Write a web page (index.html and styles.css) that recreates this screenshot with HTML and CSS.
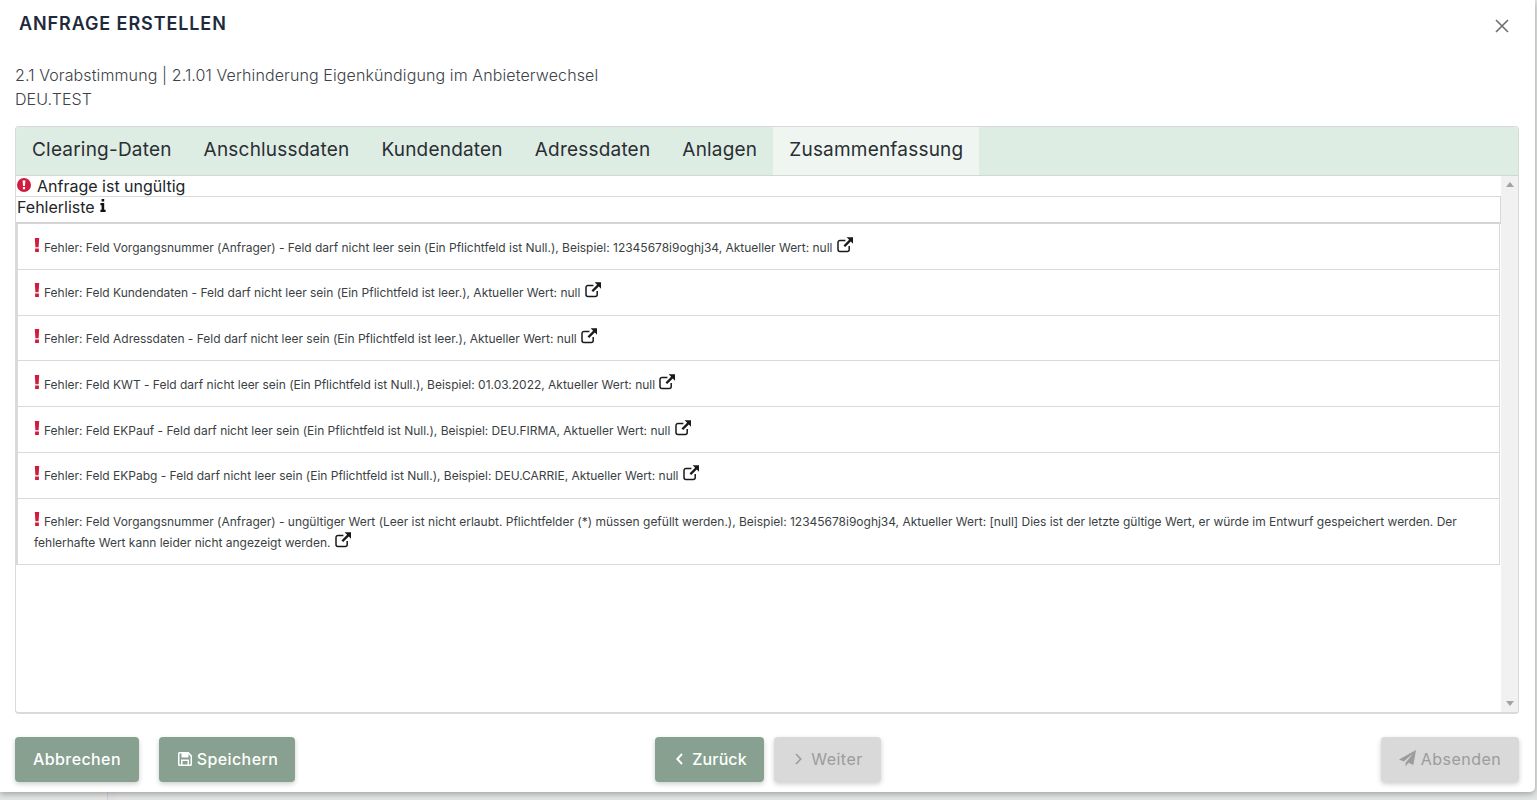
FILE: index.html
```html
<!DOCTYPE html>
<html lang="de">
<head>
<meta charset="utf-8">
<title>Anfrage erstellen</title>
<link rel="stylesheet" href="styles.css">
</head>
<body>
<svg class="defs" width="0" height="0" aria-hidden="true">
  <defs>
    <symbol id="ext" viewBox="0 0 16 16">
      <path d="M12.2 9v3.6a2 2 0 0 1-2 2H3a2 2 0 0 1-2-2V5.400a2 2 0 0 1 2-2h5.400" fill="none" stroke="currentColor" stroke-width="1.5"/>
      <path d="M9.600.3H16v6.400l-2.200-2.200-5.600 5.600-1.700-1.700 5.600-5.600z" fill="currentColor"/>
    </symbol>
    <symbol id="excl" viewBox="0 0 6 14">
      <path d="M.8 0h4.400l-.6 9.200H1.400zM1.100 10.600h3.800V14H1.100z" fill="currentColor"/>
    </symbol>
  </defs>
</svg>
<main class="modal">
  <header class="modal-head">
    <h1 class="title">ANFRAGE ERSTELLEN</h1>
    <svg class="close" viewBox="0 0 14 14" aria-label="Schließen"><path d="M1 1l12 12M13 1L1 13" stroke="currentColor" stroke-width="1.6" fill="none"/></svg>
  </header>
  <div class="subtitle">
    <div>2.1 Vorabstimmung | 2.1.01 Verhinderung Eigenkündigung im Anbieterwechsel</div>
    <div>DEU.TEST</div>
  </div>
  <section class="panel">
    <nav class="tabs">
      <a class="tab">Clearing-Daten</a>
      <a class="tab">Anschlussdaten</a>
      <a class="tab">Kundendaten</a>
      <a class="tab">Adressdaten</a>
      <a class="tab">Anlagen</a>
      <a class="tab active">Zusammenfassung</a>
    </nav>
    <div class="body">
      <div class="content">
        <div class="status">
          <svg class="status-icon" viewBox="0 0 14 14"><circle cx="7" cy="7" r="7" fill="#d01c3f"/><path d="M5.600 2.600h2.800l-.4 5.400H6zM5.900 9h2.200v2.200H5.900z" fill="#fff"/></svg>
          <span>Anfrage ist ungültig</span>
        </div>
        <div class="list-head">
          <span>Fehlerliste</span>
          <svg class="info" viewBox="0 0 6 13"><path d="M1.600 0h2.600v2.400H1.600zM.4 4h3.800v6.800H5.600V13H.4v-2.200h1.200V6.200H.4z" fill="#111"/></svg>
        </div>
        <ul class="errors">
          <li class="error"><svg class="mark"><use href="#excl"/></svg>Fehler: Feld Vorgangsnummer (Anfrager) - Feld darf nicht leer sein (Ein Pflichtfeld ist Null.), Beispiel: 12345678i9oghj34, Aktueller Wert: null <svg class="ext"><use href="#ext"/></svg></li>
          <li class="error"><svg class="mark"><use href="#excl"/></svg>Fehler: Feld Kundendaten - Feld darf nicht leer sein (Ein Pflichtfeld ist leer.), Aktueller Wert: null <svg class="ext"><use href="#ext"/></svg></li>
          <li class="error"><svg class="mark"><use href="#excl"/></svg>Fehler: Feld Adressdaten - Feld darf nicht leer sein (Ein Pflichtfeld ist leer.), Aktueller Wert: null <svg class="ext"><use href="#ext"/></svg></li>
          <li class="error"><svg class="mark"><use href="#excl"/></svg>Fehler: Feld KWT - Feld darf nicht leer sein (Ein Pflichtfeld ist Null.), Beispiel: 01.03.2022, Aktueller Wert: null <svg class="ext"><use href="#ext"/></svg></li>
          <li class="error"><svg class="mark"><use href="#excl"/></svg>Fehler: Feld EKPauf - Feld darf nicht leer sein (Ein Pflichtfeld ist Null.), Beispiel: DEU.FIRMA, Aktueller Wert: null <svg class="ext"><use href="#ext"/></svg></li>
          <li class="error"><svg class="mark"><use href="#excl"/></svg>Fehler: Feld EKPabg - Feld darf nicht leer sein (Ein Pflichtfeld ist Null.), Beispiel: DEU.CARRIE, Aktueller Wert: null <svg class="ext"><use href="#ext"/></svg></li>
          <li class="error"><svg class="mark"><use href="#excl"/></svg>Fehler: Feld Vorgangsnummer (Anfrager) - ungültiger Wert (Leer ist nicht erlaubt. Pflichtfelder (*) müssen gefüllt werden.), Beispiel: 12345678i9oghj34, Aktueller Wert: [null] Dies ist der letzte gültige Wert, er würde im Entwurf gespeichert werden. Der fehlerhafte Wert kann leider nicht angezeigt werden. <svg class="ext"><use href="#ext"/></svg></li>
        </ul>
      </div>
      <div class="scrollbar">
        <span class="arrow up"></span>
        <span class="arrow down"></span>
      </div>
    </div>
  </section>
  <footer class="foot">
    <div class="foot-left">
      <button class="btn btn-abort">Abbrechen</button>
      <button class="btn btn-save">
        <svg class="btn-icon" viewBox="0 0 14 14"><path fill-rule="evenodd" d="M1.500 0H10.500L14 3.500V12.500A1.500 1.500 0 0 1 12.500 14H1.500A1.500 1.500 0 0 1 0 12.500V1.500A1.500 1.500 0 0 1 1.500 0zM1.500 1.500V12.500H3V7.500H11V12.500H12.500V4.200L10.500 2.200V5.500H3.500V1.500zM4.500 9V12.500H9.500V9z" fill="currentColor"/></svg>
        Speichern
      </button>
    </div>
    <div class="foot-mid">
      <button class="btn btn-back">
        <svg class="chev" viewBox="0 0 8 12"><path d="M6.500 1L1.800 6l4.700 5" fill="none" stroke="currentColor" stroke-width="2"/></svg>
        Zurück
      </button>
      <button class="btn btn-next" disabled>
        <svg class="chev" viewBox="0 0 8 12"><path d="M1.500 1l4.700 5-4.700 5" fill="none" stroke="currentColor" stroke-width="1.600"/></svg>
        Weiter
      </button>
    </div>
    <button class="btn btn-send" disabled>
      <svg class="btn-icon send" viewBox="0 0 16 16"><path d="M16 0L13.500 14 8.800 12 6.200 15.500V12L13.500 3 4.500 10.800 0 9z" fill="currentColor"/></svg>
      Absenden
    </button>
  </footer>
</main>
</body>
</html>
```
FILE: styles.css
```css
* { box-sizing: border-box; }
html, body { margin: 0; height: 100%; }
body {
  background:
    linear-gradient(90deg, transparent 107px, #d2d2d6 107px, #d2d2d6 108px, #e2e2e8 108px, #e2e2e8 116px, transparent 116px),
    #e4e5e5;
  font-family: Inter, "Liberation Sans", sans-serif;
  color: #212529;
  overflow: hidden;
}
.defs { display: block; height: 0; }
.modal {
  width: 1535px;
  height: 792px;
  background: #fff;
  border-bottom-right-radius: 5px;
  box-shadow: 0 2px 6px rgba(0, 0, 0, .3);
  display: flex;
  flex-direction: column;
  padding: 0 16px 0 15px;
}
.modal-head {
  display: flex;
  justify-content: space-between;
  align-items: flex-start;
  height: 63px;
  padding: 13px 10px 0 4px;
}
.title {
  margin: 0;
  font-size: 18px;
  line-height: 22px;
  font-weight: 600;
  letter-spacing: .9px;
  color: #1e2a3c;
}
.close { width: 14px; height: 14px; margin-top: 6px; color: #6e6e6e; }
.subtitle {
  font-size: 16px;
  line-height: 24px;
  letter-spacing: .11px;
  color: #3c4248;
  height: 63px;
  font-weight: 300;
}
.panel {
  height: 588px;
  border: 1px solid #d9d9d9;
  border-bottom-width: 2px;
  border-radius: 4px;
  display: flex;
  flex-direction: column;
  overflow: hidden;
}
.tabs {
  display: flex;
  height: 49px;
  background: #deede4;
  border-bottom: 1px solid #d4d8d5;
  flex: none;
}
.tab {
  display: flex;
  align-items: center;
  padding: 0 16px 4px;
  font-size: 19px;
  letter-spacing: .2px;
  color: #2a2f33;
}
.tab.active { background: #eff6f2; }
.body { flex: 1; display: flex; min-height: 0; }
.content { flex: 1; min-width: 0; }
.status {
  display: flex;
  align-items: flex-start;
  height: 20px;
  font-size: 16px;
  line-height: 21px;
  color: #212529;
  gap: 6px;
  padding-left: 1px;
}
.status-icon { width: 14px; height: 14px; margin-top: 2px; }
.list-head {
  display: flex;
  align-items: flex-start;
  height: 28px;
  border-top: 1px solid #d9d9d9;
  border-right: 1px solid #d9d9d9;
  border-bottom: 2px solid #d4d4d4;
  font-size: 16px;
  line-height: 21px;
  padding-left: 1px;
  color: #212529;
  gap: 5px;
}
.info { width: 6px; height: 13px; margin-top: 2px; }
.errors {
  list-style: none;
  margin: 0 1px 0 0;
  padding: 0;
  border-left: 2px solid #d9d9d9;
  border-right: 1px solid #d9d9d9;
}
.error {
  padding: 13.5px 16px 10.5px;
  font-size: 12px;
  line-height: 20.8px;
  letter-spacing: -.012px;
  color: #3b3f44;
  border-bottom: 1px solid #d9d9d9;
}
.mark { width: 6px; height: 14px; margin-top: -6px; margin-right: 4px; color: #d01c3f; vertical-align: 0; }
.ext { width: 16px; height: 16px; margin-top: -8px; margin-left: 1px; color: #1a1a1a; vertical-align: -1px; }
.scrollbar {
  width: 17px;
  flex: none;
  background: #f1f1f1;
  display: flex;
  flex-direction: column;
  justify-content: space-between;
  align-items: center;
  padding: 6px 0 6px;
}
.arrow {
  width: 0;
  height: 0;
  border-left: 4px solid transparent;
  border-right: 4px solid transparent;
}
.arrow.up { border-bottom: 5px solid #a3a3a3; }
.arrow.down { border-top: 5px solid #a3a3a3; }
.foot {
  display: flex;
  align-items: flex-start;
  padding-top: 23px;
}
.foot-left { display: flex; gap: 20px; width: 640px; }
.foot-mid { display: flex; gap: 10px; flex: 1; }
.btn {
  display: flex;
  align-items: center;
  justify-content: center;
  gap: 5px;
  height: 45px;
  border: 0;
  border-radius: 4px;
  background: #87a08f;
  color: #fff;
  font-family: Inter, "Liberation Sans", sans-serif;
  font-size: 16px;
  font-weight: 500;
  letter-spacing: .4px;
  box-shadow: 0 2px 5px rgba(0, 0, 0, .2);
  padding: 0 0 2px;
}
.btn:disabled { background: #d9d9d9; color: #9c9c9c; font-weight: 400; }
.btn-abort { width: 124px; }
.btn-save { width: 136px; padding-left: 2px; }
.btn-back { width: 109px; gap: 8px; padding-left: 3px; letter-spacing: .1px; }
.btn-next { width: 107px; gap: 8px; padding-left: 2px; letter-spacing: .5px; }
.btn-send { width: 138px; letter-spacing: .5px; }
.btn-icon { width: 14px; height: 14px; }
.send { width: 17px; height: 17px; }
.chev { width: 9px; height: 12px; }
```
